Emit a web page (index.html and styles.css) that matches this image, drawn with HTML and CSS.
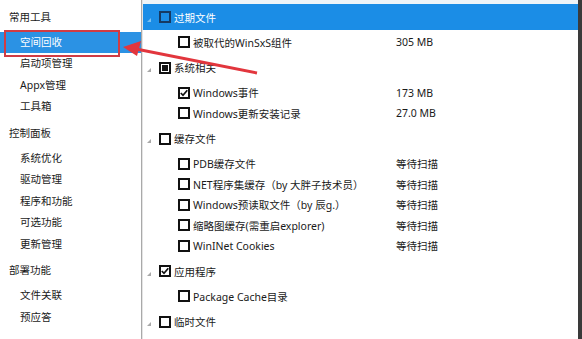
FILE: index.html
```html
<!DOCTYPE html>
<html>
<head>
	<title>空间回收</title>
	<link rel="stylesheet" href="styles.css">
</head>
<body>
	<div class="window">
		<div class="sidebar">
			<div class="sec">常用工具</div>
			<ul class="menu">
				<li class="active">空间回收</li>
				<li>启动项管理</li>
				<li>Appx管理</li>
				<li>工具箱</li>
			</ul>
			<div class="sec">控制面板</div>
			<ul class="menu">
				<li>系统优化</li>
				<li>驱动管理</li>
				<li>程序和功能</li>
				<li>可选功能</li>
				<li>更新管理</li>
			</ul>
			<div class="sec">部署功能</div>
			<ul class="menu">
				<li>文件关联</li>
				<li>预应答</li>
			</ul>
		</div>

		<div class="panel">
			<div class="group">
				<div class="head sel"><i class="tri"></i><span class="cb"></span><span>过期文件</span></div>
				<div class="items">
					<div class="item"><span class="cb"></span><span class="name">被取代的WinSxS组件</span><span class="size">305 MB</span></div>
				</div>
			</div>

			<div class="group">
				<div class="head"><i class="tri"></i><span class="cb part"></span><span>系统相关</span></div>
				<div class="items">
					<div class="item"><span class="cb"><svg viewBox="0 0 8 8"><polyline points="0.8,4 3,6.3 7.3,1.2" /></svg></span><span class="name">Windows事件</span><span class="size">173 MB</span></div>
					<div class="item"><span class="cb"></span><span class="name">Windows更新安装记录</span><span class="size">27.0 MB</span></div>
				</div>
			</div>

			<div class="group">
				<div class="head"><i class="tri"></i><span class="cb"></span><span>缓存文件</span></div>
				<div class="items">
					<div class="item"><span class="cb"></span><span class="name">PDB缓存文件</span><span class="size">等待扫描</span></div>
					<div class="item"><span class="cb"></span><span class="name">NET程序集缓存（by 大胖子技术员）</span><span class="size">等待扫描</span></div>
					<div class="item"><span class="cb"></span><span class="name">Windows预读取文件（by 辰g.）</span><span class="size">等待扫描</span></div>
					<div class="item"><span class="cb"></span><span class="name">缩略图缓存(需重启explorer)</span><span class="size">等待扫描</span></div>
					<div class="item"><span class="cb"></span><span class="name">WinINet Cookies</span><span class="size">等待扫描</span></div>
				</div>
			</div>

			<div class="group">
				<div class="head"><i class="tri"></i><span class="cb"><svg viewBox="0 0 8 8"><polyline points="0.8,4 3,6.3 7.3,1.2" /></svg></span><span>应用程序</span></div>
				<div class="items">
					<div class="item"><span class="cb"></span><span class="name">Package Cache目录</span><span class="size"></span></div>
				</div>
			</div>

			<div class="group">
				<div class="head"><i class="tri"></i><span class="cb"></span><span>临时文件</span></div>
			</div>
		</div>

		<!-- 标注：红框和箭头 -->
		<svg class="mark" width="582" height="339" viewBox="0 0 582 339">
			<rect x="5" y="31" width="114" height="25" fill="none" stroke="#d03c45" stroke-width="2" />
			<line x1="136" y1="49" x2="257" y2="73" stroke="#e2363d" stroke-width="3" />
			<polygon points="123,47 141,41 137,56" fill="#e2363d" />
		</svg>
	</div>
</body>
</html>
```

FILE: styles.css
```css
body {
	margin: 0;
	padding: 0;
	font-family: "Noto Sans", "Noto Sans CJK SC", sans-serif;
	font-size: 10.5px;
	color: #1a1a1a;
	background-color: #fff;
}

.window {
	display: flex;
	height: 339px;
	position: relative;
	overflow: hidden;
}

/* 左侧菜单 */
.sidebar {
	width: 141px;
	border-right: 1px solid #a9a9a9;
	padding-top: 3.5px;
}

.sec {
	height: 26px;
	line-height: 26px;
	padding-left: 9px;
	margin-bottom: 2px;
}

.menu {
	list-style: none;
	margin: 0 0 2px;
	padding: 0;
}

.menu li {
	height: 21.5px;
	line-height: 21.5px;
	padding-left: 20px;
}

.menu li.active {
	background-color: #2b92e4;
	color: #fff;
}

/* 右侧列表 */
.panel {
	flex: 1;
	border-left: 1px solid #e4e4e4;
	border-right: 4px solid #3a3a3a;
	padding-top: 4px;
	background: linear-gradient(#eef4f8 0, #eef4f8 4px, #fff 4px);
}

.head {
	display: flex;
	align-items: center;
	height: 26px;
	padding-left: 4px;
}

.head.sel {
	background-color: #1b8de6;
	color: #fff;
}

.tri {
	width: 0;
	height: 0;
	border-left: 4px solid transparent;
	border-bottom: 4px solid #a8a8a8;
	margin-top: 5px;
	margin-right: 8px;
}

.head.sel .tri {
	border-bottom-color: #7cc0f0;
}

.cb {
	display: inline-flex;
	width: 8px;
	height: 8px;
	border: 2px solid #111;
	margin-right: 3px;
	flex-shrink: 0;
	background-color: #fff;
}

.head.sel .cb {
	border-color: #163a63;
	background-color: transparent;
}

.cb.part {
	background-color: #111;
	box-shadow: inset 0 0 0 1px #fff;
}

.cb svg {
	width: 8px;
	height: 8px;
}

.cb polyline {
	fill: none;
	stroke: #111;
	stroke-width: 1.7;
}

.items {
	padding: 2px 0 2px;
}

.item {
	display: flex;
	align-items: center;
	height: 20.5px;
	padding-left: 35px;
}

.name {
	width: 203px;
	white-space: nowrap;
}

.size {
	white-space: nowrap;
}

.mark {
	position: absolute;
	left: 0;
	top: 0;
	pointer-events: none;
}
```
